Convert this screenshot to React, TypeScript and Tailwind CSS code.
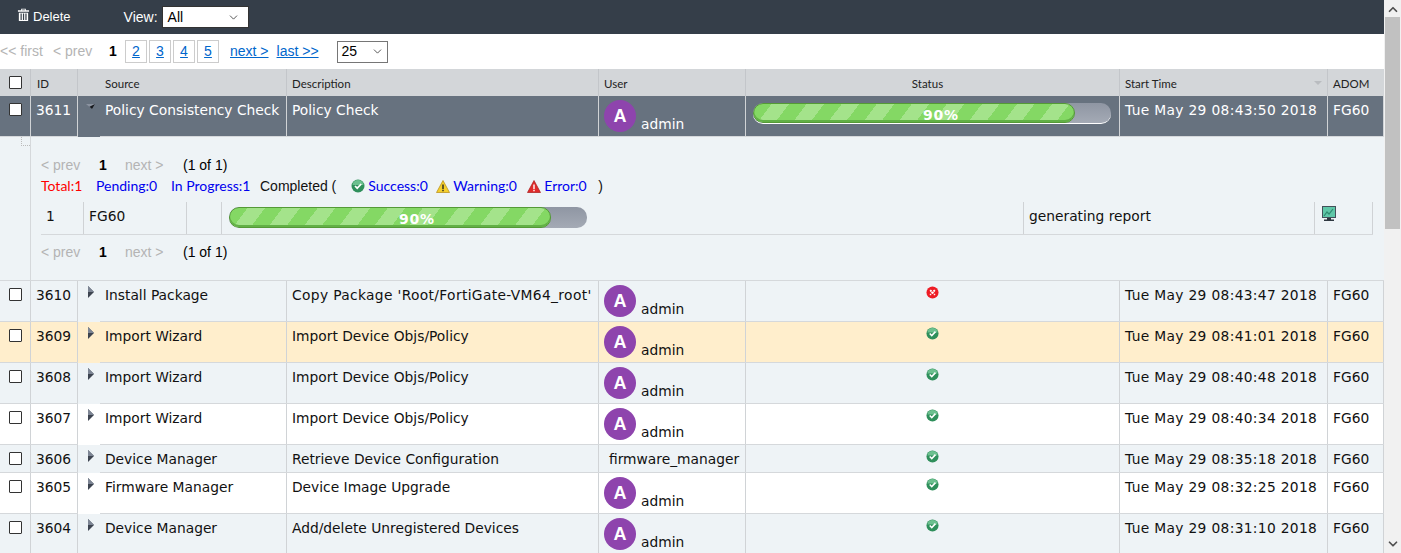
import { ChevronDown, ChevronUp } from 'lucide-react';
import type { ReactNode } from 'react';

const COLS = 'grid grid-cols-[31px_47px_209px_312px_147px_374px_208px_56px]';
const CELL_FONT = 'font-["DejaVu_Sans",sans-serif] text-[13.800px]';

interface Task {
  id: string;
  source: string;
  description: string;
  user: string;
  status: 'ok' | 'error';
  time: string;
  height: string;
  tone: string;
}

const tasks: Task[] = [
  { id: '3610', source: 'Install Package', description: "Copy Package 'Root/FortiGate-VM64_root'", user: 'admin', status: 'error', time: 'Tue May 29 08:43:47 2018', height: 'h-[41px]', tone: 'bg-[#eef3f6]' },
  { id: '3609', source: 'Import Wizard', description: 'Import Device Objs/Policy', user: 'admin', status: 'ok', time: 'Tue May 29 08:41:01 2018', height: 'h-[41px]', tone: 'bg-[#ffeecc]' },
  { id: '3608', source: 'Import Wizard', description: 'Import Device Objs/Policy', user: 'admin', status: 'ok', time: 'Tue May 29 08:40:48 2018', height: 'h-[41px]', tone: 'bg-[#eef3f6]' },
  { id: '3607', source: 'Import Wizard', description: 'Import Device Objs/Policy', user: 'admin', status: 'ok', time: 'Tue May 29 08:40:34 2018', height: 'h-[41px]', tone: 'bg-white' },
  { id: '3606', source: 'Device Manager', description: 'Retrieve Device Configuration', user: 'firmware_manager', status: 'ok', time: 'Tue May 29 08:35:18 2018', height: 'h-[28px]', tone: 'bg-[#eef3f6]' },
  { id: '3605', source: 'Firmware Manager', description: 'Device Image Upgrade', user: 'admin', status: 'ok', time: 'Tue May 29 08:32:25 2018', height: 'h-[41px]', tone: 'bg-white' },
  { id: '3604', source: 'Device Manager', description: 'Add/delete Unregistered Devices', user: 'admin', status: 'ok', time: 'Tue May 29 08:31:10 2018', height: 'h-[41px]', tone: 'bg-[#eef3f6]' },
];

function Checkbox() {
  return <span className="block h-[13px] w-[13px] rounded-[1px] border border-[#333] bg-white" />;
}

function Avatar() {
  return (
    <span className='flex h-8 w-8 shrink-0 items-center justify-center rounded-full bg-[#8e44ad] font-["Liberation_Sans",sans-serif] text-[18px] font-bold text-white'>
      A
    </span>
  );
}

function OkIcon({ className = 'h-[13px] w-[13px]' }: { className?: string }) {
  return (
    <svg viewBox="0 0 14 14" className={className}>
      <circle cx="7" cy="7" r="6.5" fill="#2f8f5b" />
      <path d="M1.5 6a5.5 5 0 0 1 11 0z" fill="#6cc08f" />
      <path d="M4 7l2.2 2.2L10.2 5" fill="none" stroke="#fff" strokeWidth="1.7" />
    </svg>
  );
}

function ErrorIcon() {
  return (
    <svg viewBox="0 0 14 14" className="h-[13px] w-[13px]">
      <circle cx="7" cy="7" r="6.5" fill="#ee1c25" />
      <path d="M4.5 4.5l5 5M9.5 4.5l-5 5" stroke="#fff" strokeWidth="2" strokeDasharray="2 1" />
    </svg>
  );
}

function Caret() {
  return (
    <svg viewBox="0 0 6 12" className="h-3 w-[6px]">
      <path d="M0 0l6 6-6 6z" fill="#3d4450" />
      <path d="M0 0l6 6H0z" fill="#7d8594" />
    </svg>
  );
}

function ProgressBar({ bottomLine = false }: { bottomLine?: boolean }) {
  return (
    <div
      className={`relative h-[21px] w-[358px] overflow-hidden rounded-[10px] bg-[linear-gradient(#8f96a3,#a4aab5)] ${bottomLine ? 'border-b border-white' : ''}`}
    >
      <div className="h-full w-[322px] rounded-[10px] border border-[#549a36] bg-[repeating-linear-gradient(127deg,#84d864_0px,#84d864_14px,#a4e38b_14px,#a4e38b_28px)] shadow-[inset_0_-2px_0_#62b046]" />
      <span className='absolute left-[170px] top-[2px] font-["DejaVu_Sans",sans-serif] text-[14px] font-bold tracking-[0.8px] text-white'>
        90%
      </span>
    </div>
  );
}

function Pager() {
  return (
    <div className='flex h-[20px] items-center font-["Liberation_Sans",sans-serif] text-[14px]'>
      <span className="w-[58px] text-[#b4b4b4]">&lt; prev</span>
      <span className="w-[26px] font-bold text-black">1</span>
      <span className="w-[58px] text-[#b4b4b4]">next &gt;</span>
      <span className="text-black">(1 of 1)</span>
    </div>
  );
}

function HeaderCell({ children, center, last }: { children?: ReactNode; center?: boolean; last?: boolean }) {
  return (
    <div
      className={`relative flex items-center px-[5px] pt-[2px] ${center ? 'justify-center pr-[15px]' : ''} ${last ? '' : 'border-r border-[#c3c6ca]'}`}
    >
      {children}
    </div>
  );
}

function TaskRow({ task }: { task: Task }) {
  const cell = 'border-r border-[#d0d3d6] px-[5px] pt-[4px]';
  const wide = task.description.startsWith('Copy');
  return (
    <div className={`${COLS} ${CELL_FONT} ${task.height} ${task.tone} relative border-b border-[#d5d8db] text-[#111]`}>
      <div className="flex justify-center border-r border-[#d0d3d6] pt-[7px]">
        <Checkbox />
      </div>
      <div className={cell}>{task.id}</div>
      <div className="flex border-r border-[#d0d3d6] pl-[10px]">
        <span className="w-[17px] pt-[5px]">
          <Caret />
        </span>
        <span className="pt-[4px]">{task.source}</span>
      </div>
      <div className={wide ? `${cell} whitespace-nowrap tracking-[0.35px]` : cell}>{task.description}</div>
      {task.user === 'admin' ? (
        <div className="flex items-start border-r border-[#d0d3d6] pl-[5px] pt-[4px]">
          <Avatar />
          <span className="ml-[5px] mt-[14px]">admin</span>
        </div>
      ) : (
        <div className="border-r border-[#d0d3d6] pl-[10px] pt-[4px]">{task.user}</div>
      )}
      <div className="flex justify-center border-r border-[#d0d3d6] pt-[5px]">
        {task.status === 'ok' ? <OkIcon /> : <ErrorIcon />}
      </div>
      <div className={`${cell} tracking-[0.33px]`}>{task.time}</div>
      <div className={cell}>FG60</div>
      <span className={`absolute bottom-[-1px] left-[78px] h-px w-[22px] ${task.tone}`} />
    </div>
  );
}

function ExpandedDetail() {
  return (
    <div className='flex h-[144px] border-b border-[#d5d8db] bg-[#eef3f6] font-["Liberation_Sans",sans-serif]'>
      <div className="w-[31px] border-r border-[#d5d8db]">
        <span className="ml-[21px] block h-[9px] w-[9px] border-b border-l border-dotted border-[#bbb]" />
      </div>
      <div className="w-[1342px] pl-[10px] pt-[18px]">
        <Pager />
        <div className='flex h-[20px] items-center font-["Lato",sans-serif] text-[14px] text-[#0000ee]'>
          <span className="w-[55px] text-[#ff0000]">Total:1</span>
          <span className="w-[75px]">Pending:0</span>
          <span className="w-[89px]">In Progress:1</span>
          <span className='translate-y-px font-["Liberation_Sans",sans-serif] text-[#111]'>Completed (</span>
          <OkIcon className="ml-[15px] mr-[3px] h-[14px] w-[14px] translate-y-px" />
          <span className="w-[60px]">Success:0</span>
          <svg viewBox="0 0 14 13" className="ml-[8px] mr-[3px] h-[13px] w-[14px] translate-y-px">
            <path d="M7 .5L13.500 12.500H.5z" fill="#f5cf2c" stroke="#b58a10" strokeWidth="0.7" />
            <path d="M6.300 4.500h1.400v4.500H6.300zM6.300 9.800h1.400v1.400H6.300z" fill="#222" />
          </svg>
          <span className="w-[64px]">Warning:0</span>
          <svg viewBox="0 0 14 13" className="ml-[10px] mr-[3px] h-[13px] w-[14px] translate-y-px">
            <path d="M7 .5L13.500 12.500H.5z" fill="#e02b2b" stroke="#a81a1a" strokeWidth="0.7" />
            <path d="M6.300 4.500h1.400v4.500H6.300zM6.300 9.800h1.400v1.400H6.300z" fill="#fff" />
          </svg>
          <span className="w-[43px]">Error:0</span>
          <span className='ml-[11px] translate-y-px font-["Liberation_Sans",sans-serif] text-[#111]'>)</span>
        </div>
        <div className={`mt-[7px] grid h-[33px] grid-cols-[43px_103px_35px_802px_291px_58px] border-b border-[#d5d8db] ${CELL_FONT} text-[#111]`}>
          <div className="border-r border-[#cfd2d5] pl-[5px] pt-[4px]">1</div>
          <div className="border-r border-[#cfd2d5] pl-[5px] pt-[4px]">FG60</div>
          <div className="border-r border-[#cfd2d5]" />
          <div className="border-r border-[#cfd2d5] pl-[7px] pt-[5px]">
            <ProgressBar />
          </div>
          <div className="border-r border-[#cfd2d5] pl-[5px] pt-[4px]">generating report</div>
          <div className="border-r border-[#cfd2d5] pl-[7px] pt-[4px]">
            <svg viewBox="0 0 14 16" className="h-[16px] w-[14px]">
              <rect x="0.500" y="0.500" width="13" height="11" fill="#5fc7a8" stroke="#44505a" />
              <path d="M2 10l3-4 2 2 4-5" fill="none" stroke="#2f8a70" strokeWidth="1.200" />
              <path d="M5 12h4v1.500h3V15H2v-1.500h3z" fill="#2e3740" />
            </svg>
          </div>
        </div>
        <div className="mt-[7px]">
          <Pager />
        </div>
      </div>
    </div>
  );
}

export default function App() {
  return (
    <div className="flex h-[553px] w-[1401px] overflow-hidden bg-white">
      <main className="w-[1384px] shrink-0">
        {/* toolbar */}
        <div className='flex h-[34px] items-center bg-[#353e49] font-["Liberation_Sans",sans-serif] text-[13px] text-white'>
          <svg viewBox="0 0 14 15" className="ml-[17px] mr-[3px] h-[14px] w-[13px] -translate-y-[2px]">
            <path d="M4.500 2.500V.8h5v1.700h3.500V4H1V2.500zM5.500 2.500h3v-.8h-3z" fill="#fff" fillRule="evenodd" />
            <path d="M2 5h10v9H2zM3.800 6v7h1.300V6zM6.400 6v7h1.300V6zM9 6v7h1.300V6z" fill="#fff" fillRule="evenodd" />
          </svg>
          <span>Delete</span>
          <span className="ml-[53px] text-[14px]">View:</span>
          <span className="ml-[4px] flex h-[22px] w-[87px] items-center justify-between border border-[#333] bg-white pl-[5px] pr-[8px] text-[14px] text-black">
            All
            <ChevronDown size={13} strokeWidth={1.5} className="text-[#333]" />
          </span>
        </div>

        {/* pagination */}
        <div className='flex h-[35px] items-center font-["Liberation_Sans",sans-serif] text-[14px]'>
          <span className="w-[53px] text-[#b4b4b4]">&lt;&lt; first</span>
          <span className="w-[56px] text-[#b4b4b4]">&lt; prev</span>
          <span className="w-[16px] font-bold text-black">1</span>
          <div className="flex gap-[2px]">
            {['2', '3', '4', '5'].map((n) => (
              <span
                key={n}
                className="flex h-[23px] w-[22px] items-center justify-center border border-[#cccccc] text-[#0066cc] underline"
              >
                {n}
              </span>
            ))}
          </div>
          <span className="ml-[11px] text-[#0066cc] underline">next &gt;</span>
          <span className="ml-[8px] text-[#0066cc] underline">last &gt;&gt;</span>
          <span className="ml-[18px] flex h-[22px] w-[51px] items-center justify-between border border-[#767676] pl-[4px] pr-[3px] text-black">
            25
            <ChevronDown size={13} strokeWidth={1.5} className="text-[#333]" />
          </span>
        </div>

        {/* header */}
        <div className={`${COLS} h-[27px] bg-[#d3d6d9] font-["Lato",sans-serif] text-[11.500px] text-[#222]`}>
          <div className="flex items-center justify-center border-r border-[#c3c6ca]">
            <Checkbox />
          </div>
          <HeaderCell>
            <span className="pl-px">ID</span>
          </HeaderCell>
          <HeaderCell>
            <span className="pl-[22px]">Source</span>
          </HeaderCell>
          <HeaderCell>Description</HeaderCell>
          <HeaderCell>User</HeaderCell>
          <HeaderCell center>Status</HeaderCell>
          <HeaderCell>
            Start Time
            <span className="absolute right-[5px] top-[12px] h-0 w-0 border-x-[4px] border-t-[4px] border-x-transparent border-t-[#b9bcc0]" />
          </HeaderCell>
          <HeaderCell last>ADOM</HeaderCell>
        </div>

        {/* expanded row */}
        <div className={`${COLS} ${CELL_FONT} relative h-[41px] border-b border-[#d5d8db] bg-[#67727f] text-white`}>
          <div className="flex justify-center border-r border-[#d0d3d6] pt-[7px]">
            <Checkbox />
          </div>
          <div className="border-r border-[#d0d3d6] px-[5px] pt-[4px]">3611</div>
          <div className="flex border-r border-[#d0d3d6] pl-[8px]">
            <span className="w-[19px] pt-[7px]">
              <svg viewBox="0 0 10 8" className="h-2 w-[10px]">
                <path d="M0 1h9L6 6z" fill="#8b93a0" />
                <path d="M9 1L6 6 3.500 3.800z" fill="#15181d" />
              </svg>
            </span>
            <span className="pt-[4px]">Policy Consistency Check</span>
          </div>
          <div className="border-r border-[#d0d3d6] px-[5px] pt-[4px]">Policy Check</div>
          <div className="flex items-start border-r border-[#d0d3d6] pl-[5px] pt-[4px]">
            <Avatar />
            <span className="ml-[5px] mt-[14px]">admin</span>
          </div>
          <div className="border-r border-[#d0d3d6] pl-[7px] pt-[7px]">
            <ProgressBar bottomLine />
          </div>
          <div className="border-r border-[#d0d3d6] px-[5px] pt-[4px] tracking-[0.33px]">Tue May 29 08:43:50 2018</div>
          <div className="border-r border-[#d0d3d6] px-[5px] pt-[4px]">FG60</div>
          <span className="absolute bottom-[-1px] left-[78px] h-px w-[22px] bg-[#67727f]" />
        </div>

        <ExpandedDetail />

        {tasks.map((task) => (
          <TaskRow key={task.id} task={task} />
        ))}
      </main>

      {/* scrollbar */}
      <aside className="flex w-[17px] shrink-0 flex-col items-center bg-[#f1f1f1]">
        <ChevronUp size={14} strokeWidth={3} className="mt-[2px] h-[15px] text-[#505050]" />
        <div className="h-[212px] w-[15px] bg-[#c1c1c1]" />
        <ChevronDown size={14} strokeWidth={3} className="mt-auto mb-[2px] text-[#505050]" />
      </aside>
    </div>
  );
}
